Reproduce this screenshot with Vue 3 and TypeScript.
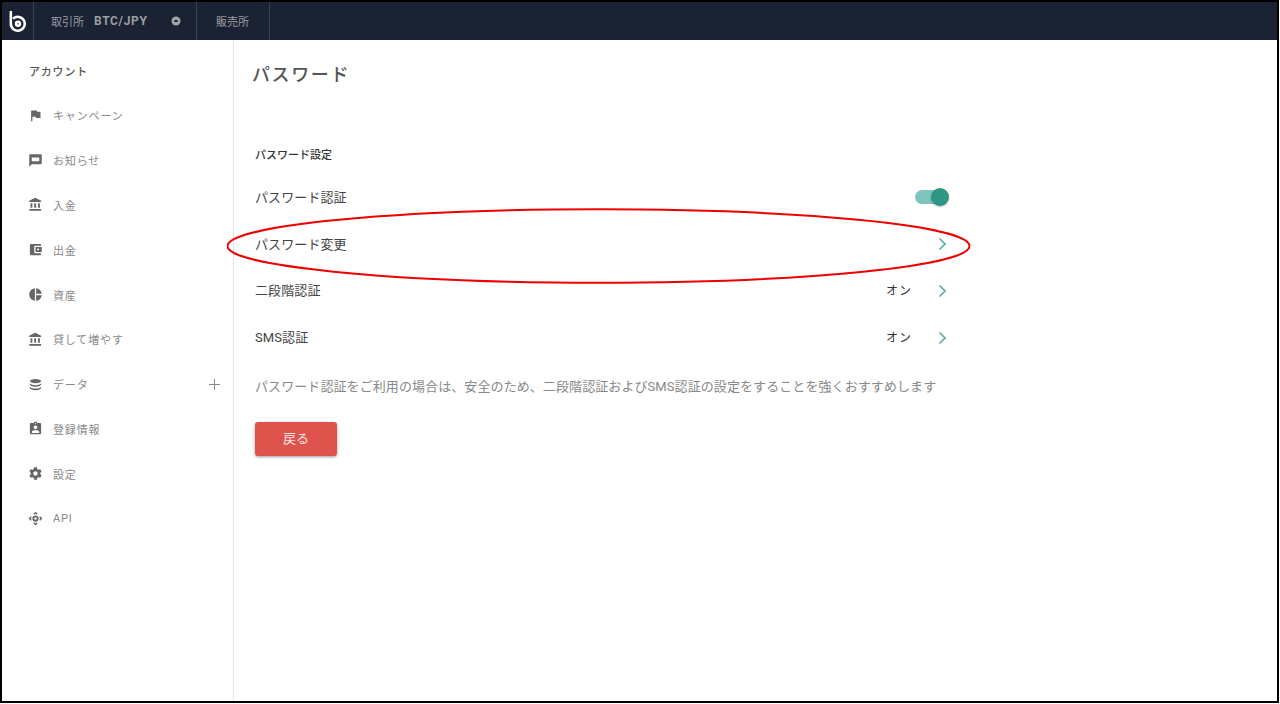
<script setup lang="ts">
interface NavItem { label: string; icon: string; plus?: boolean }
const bank = 'M4 10v7h3v-7H4zm6 0v7h3v-7h-3zM2 22h19v-3H2v3zm14-12v7h3v-7h-3zM11.500 1 2 6v2h19V6l-9.500-5z'
const nav: NavItem[] = [
  { label: 'キャンペーン', icon: 'M14.400 6 14 4H5v17h2v-7h5.600l.4 2h7V6z' },
  { label: 'お知らせ', icon: 'M20 2H4c-1.100 0-2 .9-2 2v18l4-4h14c1.100 0 2-.9 2-2V4c0-1.100-.9-2-2-2zM6 7h12v6H6z' },
  { label: '入金', icon: bank },
  { label: '出金', icon: 'M21 18v1c0 1.100-.9 2-2 2H5c-1.110 0-2-.9-2-2V5c0-1.100.89-2 2-2h14c1.100 0 2 .9 2 2v1h-9c-1.110 0-2 .9-2 2v8c0 1.100.89 2 2 2h9zm-9-2h10V8H12v8zm4-2.500c-.83 0-1.500-.67-1.500-1.500s.67-1.500 1.500-1.500 1.500.67 1.500 1.500-.67 1.500-1.500 1.500z' },
  { label: '資産', icon: 'M11 2v20c-5.070-.5-9-4.790-9-10s3.930-9.500 9-10zm2.030 0v8.990H22c-.47-4.740-4.240-8.520-8.970-8.990zm0 11.010V22c4.740-.47 8.500-4.250 8.970-8.990h-8.970z' },
  { label: '貸して増やす', icon: bank },
  { label: 'データ', icon: 'M12 3C7 3 3 4.600 3 6.500S7 10 12 10s9-1.600 9-3.500S17 3 12 3zM3 9.500V12c0 1.900 4 3.500 9 3.500s9-1.600 9-3.500V9.500c0 1.900-4 3.500-9 3.500S3 11.400 3 9.500zm0 5.500v2.500C3 19.400 7 21 12 21s9-1.600 9-3.500V15c0 1.900-4 3.500-9 3.500S3 16.900 3 15z', plus: true },
  { label: '登録情報', icon: 'M19 3h-4.180C14.400 1.840 13.300 1 12 1s-2.400.84-2.820 2H5c-1.100 0-2 .9-2 2v14c0 1.100.9 2 2 2h14c1.100 0 2-.9 2-2V5c0-1.100-.9-2-2-2zm-7 0c.55 0 1 .45 1 1s-.45 1-1 1-1-.45-1-1 .45-1 1-1zm0 4c1.660 0 3 1.340 3 3s-1.340 3-3 3-3-1.340-3-3 1.340-3 3-3zm6 12H6v-1.400c0-2 4-3.100 6-3.100s6 1.100 6 3.100V19z' },
  { label: '設定', icon: 'M19.430 12.980c.04-.32.07-.64.07-.98s-.03-.66-.07-.98l2.110-1.650c.19-.15.24-.42.12-.64l-2-3.460c-.12-.22-.39-.3-.61-.22l-2.490 1c-.52-.4-1.080-.73-1.690-.98l-.38-2.650C14.460 2.180 14.250 2 14 2h-4c-.25 0-.46.18-.49.42l-.38 2.650c-.61.25-1.170.59-1.690.98l-2.490-1c-.23-.09-.49 0-.61.22l-2 3.460c-.13.22-.07.49.12.64l2.110 1.650c-.04.32-.07.65-.07.98s.03.66.07.98l-2.110 1.650c-.19.15-.24.42-.12.64l2 3.460c.12.22.39.3.61.22l2.490-1c.52.4 1.080.73 1.690.98l.38 2.650c.03.24.24.42.49.42h4c.25 0 .46-.18.49-.42l.38-2.650c.61-.25 1.170-.59 1.690-.98l2.490 1c.23.09.49 0 .61-.22l2-3.460c.12-.22.07-.49-.12-.64l-2.110-1.650zM12 15.500c-1.930 0-3.500-1.570-3.500-3.500s1.570-3.500 3.500-3.500 3.500 1.570 3.500 3.500-1.570 3.500-3.500 3.500z' },
  { label: 'API', icon: 'M12 1 8.500 4.500 10 6l2-2 2 2 1.500-1.500L12 1zM4.500 8.500 1 12l3.500 3.500L6 14l-2-2 2-2-1.500-1.500zm15 0L18 10l2 2-2 2 1.500 1.500L23 12l-3.500-3.500zM10 18l-1.500 1.500L12 23l3.500-3.500L14 18l-2 2-2-2zM12 7a5 5 0 1 0 0 10 5 5 0 0 0 0-10zm0 3a2 2 0 1 1 0 4 2 2 0 0 1 0-4z' },
]
interface Row { label: string; value?: string; toggle?: boolean }
const rows: Row[] = [
  { label: 'パスワード認証', toggle: true },
  { label: 'パスワード変更' },
  { label: '二段階認証', value: 'オン' },
  { label: 'SMS認証', value: 'オン' },
]
</script>

<template>
  <div class="frame">
    <header class="topbar">
      <div class="logo">
        <svg width="20" height="22" viewBox="0 0 18 20" fill="none" stroke="#fff" stroke-width="2.300">
          <path d="M2.500 1v11.500a6.300 6.300 0 1 0 2-4.600" />
          <circle cx="9" cy="12.500" r="1.800" />
        </svg>
      </div>
      <div class="tab tab-main">
        <span>取引所</span>
        <b class="pair">BTC/JPY</b>
        <svg class="caret" width="10" height="10" viewBox="0 0 10 10">
          <circle cx="5" cy="5" r="4.500" fill="#a0a3a9" />
          <rect x="3.300" y="4" width="3.400" height="2" fill="#1a2233" />
        </svg>
      </div>
      <div class="tab tab-sale">販売所</div>
    </header>
    <div class="body">
      <aside class="sidebar">
        <h2 class="side-title">アカウント</h2>
        <ul class="nav">
          <li v-for="item in nav" :key="item.label" class="nav-item">
            <svg class="nav-icon" width="15" height="15" viewBox="0 0 24 24" fill="#666">
              <path :d="item.icon" fill-rule="evenodd" />
            </svg>
            <span class="nav-label">{{ item.label }}</span>
            <svg v-if="item.plus" class="plus" width="11" height="11" viewBox="0 0 11 11" stroke="#888" stroke-width="1">
              <path d="M5.500 0v11M0 5.500h11" />
            </svg>
          </li>
        </ul>
      </aside>
      <main class="content">
        <h1 class="title">パスワード</h1>
        <section class="panel">
          <h3 class="section-title">パスワード設定</h3>
          <div v-for="row in rows" :key="row.label" class="row">
            <span class="row-label">{{ row.label }}</span>
            <span v-if="row.value" class="row-value">{{ row.value }}</span>
            <span v-if="row.toggle" class="toggle"><span class="track"></span><span class="thumb"></span></span>
            <svg v-else class="chev" width="9" height="14" viewBox="0 0 9 14" fill="none" stroke="#5bada3" stroke-width="1.700">
              <path d="M1.500 1.500 7 7l-5.500 5.500" />
            </svg>
          </div>
          <p class="note">パスワード認証をご利用の場合は、安全のため、二段階認証およびSMS認証の設定をすることを強くおすすめします</p>
          <button class="back" type="button">戻る</button>
        </section>
      </main>
    </div>
    <svg class="annotation" width="760" height="90" viewBox="0 0 760 90" fill="none">
      <ellipse cx="371.500" cy="44" rx="371" ry="36.700" stroke="#ee0000" stroke-width="2" />
    </svg>
  </div>
</template>

<style>
html, body { margin: 0; background: #fff; }
</style>

<style scoped>
.frame {
  position: relative;
  box-sizing: border-box;
  width: 1279px;
  height: 703px;
  border: 2px solid #000;
  display: flex;
  flex-direction: column;
  overflow: hidden;
  font-family: Roboto, "Noto Sans CJK JP", sans-serif;
  background: #fff;
}
.topbar {
  height: 38px;
  flex: none;
  display: flex;
  background: #1a2233;
  color: #9a9da4;
  font-size: 11px;
}
.logo {
  width: 32px;
  flex: none;
  box-sizing: border-box;
  display: flex;
  align-items: center;
  justify-content: center;
  border-right: 1px solid #3a4150;
}
.tab {
  display: flex;
  align-items: center;
  box-sizing: border-box;
  border-right: 1px solid #3a4150;
}
.tab-main { width: 163px; padding-left: 17px; }
.tab-sale { width: 73px; padding-left: 19px; }
.pair { font-size: 12px; font-weight: 700; margin-left: 10px; letter-spacing: 0.65px; }
.caret { margin-left: 23px; }
.body { flex: 1; display: flex; min-height: 0; }
.sidebar {
  width: 232px;
  flex: none;
  box-sizing: border-box;
  border-right: 1px solid #e6e6e6;
  padding: 24px 0 0 27px;
}
.side-title {
  margin: 0;
  font-size: 11px;
  line-height: 18px;
  font-weight: 500;
  color: #555;
  letter-spacing: 0.8px;
}
.nav { list-style: none; margin: 11px 0 0 -1px; padding: 0; }
.nav-item {
  height: 44.800px;
  display: flex;
  align-items: center;
  position: relative;
}
.nav-icon { flex: none; }
.nav-label { margin-left: 10px; font-size: 11px; color: #888; letter-spacing: 0.85px; }
.plus { position: absolute; left: 181px; top: 17px; }
.content { flex: 1; min-width: 0; padding: 0 0 0 18px; }
.title {
  margin: 22px 0 0;
  font-size: 18px;
  line-height: 26px;
  font-weight: 500;
  color: #555;
  letter-spacing: 1.6px;
}
.panel { width: 695px; padding-left: 3px; margin-top: 58px; }
.section-title { margin: 0 0 7px; font-size: 11px; line-height: 20px; font-weight: 500; color: #333; }
.row { height: 46.800px; display: flex; align-items: center; color: #444; font-size: 13px; letter-spacing: 0.1px; }
.row-label { flex: 1; }
.row-value { font-size: 12px; color: #333; margin-right: 26px; letter-spacing: 1px; }
.chev { margin-right: 3px; margin-top: 2px; }
.toggle { position: relative; width: 34px; height: 20px; margin-right: 1px; margin-top: 2px; }
.track { position: absolute; left: 0; top: 3px; width: 28px; height: 14px; border-radius: 7px; background: #7fc4ba; }
.thumb { position: absolute; right: 0; top: 1px; width: 18px; height: 18px; border-radius: 50%; background: #2f9585; box-shadow: 0 1px 2px rgba(0,0,0,.25); }
.note { margin: 17px 0 0; font-size: 13px; line-height: 20px; color: #888; white-space: nowrap; letter-spacing: 0.085px; }
.back {
  display: block;
  margin-top: 25px;
  width: 82px;
  height: 34px;
  border: 0;
  border-radius: 3px;
  background: #de534b;
  color: #fbe3e1;
  font: inherit;
  font-size: 13px;
  box-shadow: 0 1px 3px rgba(0,0,0,.4);
  padding: 0 0 3px;
}
.annotation { position: absolute; left: 225px; top: 200px; pointer-events: none; }
</style>
